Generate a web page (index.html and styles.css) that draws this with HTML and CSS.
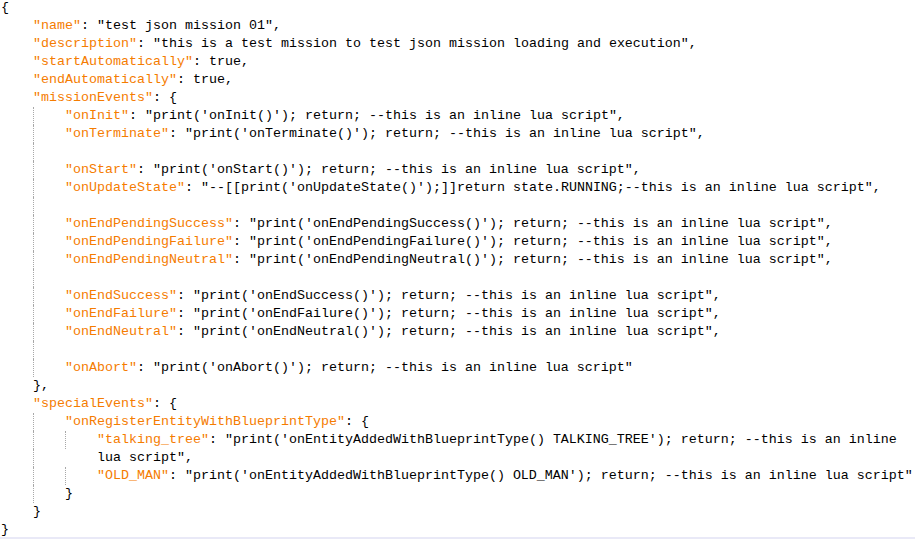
FILE: index.html
```html
<!DOCTYPE html>
<html>
<head>
<meta charset="utf-8">
<link rel="stylesheet" href="styles.css">
</head>
<body>
<div class="editor">
<div class="code">
<div class="line">{</div>
<div class="line">    <span class="k">"name"</span>: "test json mission 01",</div>
<div class="line">    <span class="k">"description"</span>: "this is a test mission to test json mission loading and execution",</div>
<div class="line">    <span class="k">"startAutomatically"</span>: true,</div>
<div class="line">    <span class="k">"endAutomatically"</span>: true,</div>
<div class="line">    <span class="k">"missionEvents"</span>: {</div>
<div class="line">    <span class="g">    </span><span class="k">"onInit"</span>: "print('onInit()'); return; --this is an inline lua script",</div>
<div class="line">    <span class="g">    </span><span class="k">"onTerminate"</span>: "print('onTerminate()'); return; --this is an inline lua script",</div>
<div class="line">    <span class="g">    </span></div>
<div class="line">    <span class="g">    </span><span class="k">"onStart"</span>: "print('onStart()'); return; --this is an inline lua script",</div>
<div class="line">    <span class="g">    </span><span class="k">"onUpdateState"</span>: "--[[print('onUpdateState()');]]return state.RUNNING;--this is an inline lua script",</div>
<div class="line">    <span class="g">    </span></div>
<div class="line">    <span class="g">    </span><span class="k">"onEndPendingSuccess"</span>: "print('onEndPendingSuccess()'); return; --this is an inline lua script",</div>
<div class="line">    <span class="g">    </span><span class="k">"onEndPendingFailure"</span>: "print('onEndPendingFailure()'); return; --this is an inline lua script",</div>
<div class="line">    <span class="g">    </span><span class="k">"onEndPendingNeutral"</span>: "print('onEndPendingNeutral()'); return; --this is an inline lua script",</div>
<div class="line">    <span class="g">    </span></div>
<div class="line">    <span class="g">    </span><span class="k">"onEndSuccess"</span>: "print('onEndSuccess()'); return; --this is an inline lua script",</div>
<div class="line">    <span class="g">    </span><span class="k">"onEndFailure"</span>: "print('onEndFailure()'); return; --this is an inline lua script",</div>
<div class="line">    <span class="g">    </span><span class="k">"onEndNeutral"</span>: "print('onEndNeutral()'); return; --this is an inline lua script",</div>
<div class="line">    <span class="g">    </span></div>
<div class="line">    <span class="g">    </span><span class="k">"onAbort"</span>: "print('onAbort()'); return; --this is an inline lua script"</div>
<div class="line">    },</div>
<div class="line">    <span class="k">"specialEvents"</span>: {</div>
<div class="line">    <span class="g">    </span><span class="k">"onRegisterEntityWithBlueprintType"</span>: {</div>
<div class="line">    <span class="g">    </span><span class="g">    </span><span class="k">"talking_tree"</span>: "print('onEntityAddedWithBlueprintType() TALKING_TREE'); return; --this is an inline</div>
<div class="line">    <span class="g">    </span>    lua script",</div>
<div class="line">    <span class="g">    </span><span class="g">    </span><span class="k">"OLD_MAN"</span>: "print('onEntityAddedWithBlueprintType() OLD_MAN'); return; --this is an inline lua script"</div>
<div class="line">    <span class="g">    </span>}</div>
<div class="line">    }</div>
<div class="line">}</div>
</div>
</div>
</body>
</html>
```
FILE: styles.css
```css
html, body {
  margin: 0;
  padding: 0;
  background: #ffffff;
}

.editor {
  height: 537px;
  overflow: hidden;
  border-bottom: 2px solid #e9e9f7;
  background: #ffffff;
}

.code {
  margin-top: -1px;
  padding-left: 1px;
  font-family: "Liberation Mono", "Courier New", monospace;
  font-size: 10pt;
  color: #000000;
}

.line {
  height: 18px;
  line-height: 18px;
  white-space: pre;
}

.k {
  color: #f57c00;
}

.g {
  display: inline-block;
  box-sizing: border-box;
  width: 4ch;
  height: 18px;
  vertical-align: top;
  border-left: 1px dotted #a8a8a8;
}
```
